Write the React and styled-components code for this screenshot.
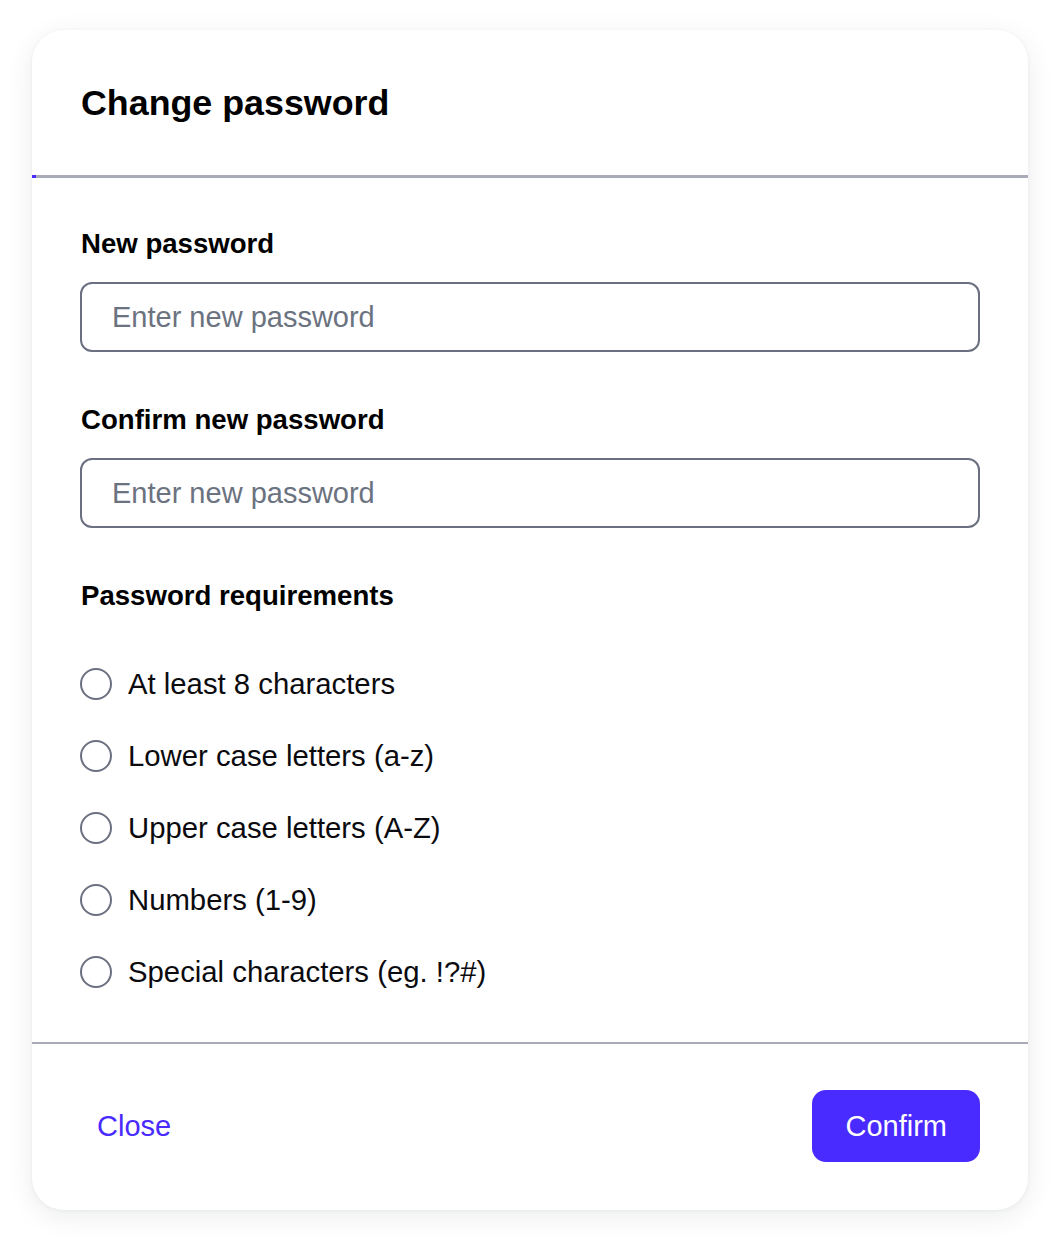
import React, { useState } from 'react'
import styled, { createGlobalStyle } from 'styled-components'

const GlobalStyle = createGlobalStyle`
  * { box-sizing: border-box; }
  html, body {
    margin: 0;
    padding: 0;
    background: #ffffff;
    font-family: "Liberation Sans", Arial, sans-serif;
    color: #0b0b0f;
  }
`

const Page = styled.div`
  padding: 30px 32px 34px 32px;
`

const Card = styled.div`
  width: 996px;
  background: #ffffff;
  border-radius: 32px;
  overflow: hidden;
  box-shadow: 0 6px 28px rgba(17, 24, 39, 0.08), 0 1px 4px rgba(17, 24, 39, 0.05);
`

const Header = styled.div`
  height: 145px;
  display: flex;
  align-items: center;
  padding: 3px 49px 0;
`

const Title = styled.h1`
  margin: 0;
  font-size: 35.8px;
  line-height: 1.15;
  font-weight: 700;
  color: #000000;
`

const Track = styled.div`
  display: flex;
  height: ${({ size }) => size}px;
  background: #a9abb9;
`

const Fill = styled.div`
  background: #4a2bff;
`

const Body = styled.div`
  display: flex;
  flex-direction: column;
  gap: 51px;
  padding: 49px 48px 50px 49px;
`

const Field = styled.div`
  display: flex;
  flex-direction: column;
  gap: 21px;
`

const Label = styled.label`
  font-size: 27.6px;
  line-height: 34px;
  font-weight: 700;
  color: #000000;
`

const Input = styled.input`
  width: 900px;
  margin-left: -1px;
  height: 70px;
  border: 2px solid #6b7080;
  border-radius: 12px;
  padding: 0 30px;
  font-family: inherit;
  font-size: 29px;
  color: #111111;
  outline: none;
  background: #ffffff;

  &::placeholder {
    color: #6b7280;
  }
`

const List = styled.ul`
  list-style: none;
  margin: 0;
  padding: 0;
  display: flex;
  flex-direction: column;
  gap: 32px;
`

const Rule = styled.li`
  display: flex;
  align-items: center;
  height: 40px;
  gap: 16px;
  margin-left: -1px;
  font-size: 29.3px;
  color: ${({ met }) => (met ? '#16a34a' : '#0b0b0f')};
`

const Circle = styled.span`
  width: 32px;
  height: 32px;
  border-radius: 50%;
  border: 2.5px solid ${({ met }) => (met ? '#16a34a' : '#6b7080')};
  flex-shrink: 0;
`

const Footer = styled.div`
  display: flex;
  align-items: center;
  justify-content: space-between;
  padding: 46px 48px 48px 49px;
`

const TextButton = styled.button`
  height: 72px;
  padding: 0 16px;
  border: none;
  background: transparent;
  font-family: inherit;
  font-size: 29px;
  color: #4a2bff;
  cursor: pointer;
`

const PrimaryButton = styled.button`
  height: 72px;
  padding: 0 33px;
  border: none;
  border-radius: 14px;
  background: #4a2bff;
  color: #ffffff;
  font-family: inherit;
  font-size: 29px;
  cursor: pointer;
`

const rules = [
  { label: 'At least 8 characters', test: (v) => v.length >= 8 },
  { label: 'Lower case letters (a-z)', test: (v) => /[a-z]/.test(v) },
  { label: 'Upper case letters (A-Z)', test: (v) => /[A-Z]/.test(v) },
  { label: 'Numbers (1-9)', test: (v) => /[0-9]/.test(v) },
  { label: 'Special characters (eg. !?#)', test: (v) => /[^A-Za-z0-9]/.test(v) },
]

const App = () => {
  const [password, setPassword] = useState('')
  const [confirm, setConfirm] = useState('')

  return (
    <React.Fragment>
      <GlobalStyle />
      <Page>
        <Card>
          <Header>
            <Title>Change password</Title>
          </Header>
          <Track size={3}>
            <Fill style={{ width: 4 }} />
          </Track>
          <Body>
            <Field>
              <Label htmlFor="new-password">New password</Label>
              <Input
                id="new-password"
                type="password"
                placeholder="Enter new password"
                value={password}
                onChange={(e) => setPassword(e.target.value)}
              />
            </Field>
            <Field>
              <Label htmlFor="confirm-password">Confirm new password</Label>
              <Input
                id="confirm-password"
                type="password"
                placeholder="Enter new password"
                value={confirm}
                onChange={(e) => setConfirm(e.target.value)}
              />
            </Field>
            <Label as="div">Password requirements</Label>
            <List>
              {rules.map((rule) => {
                const met = rule.test(password)
                return (
                  <Rule key={rule.label} met={met}>
                    <Circle met={met} />
                    {rule.label}
                  </Rule>
                )
              })}
            </List>
          </Body>
          <Track size={2} />
          <Footer>
            <TextButton>Close</TextButton>
            <PrimaryButton>Confirm</PrimaryButton>
          </Footer>
        </Card>
      </Page>
    </React.Fragment>
  )
}

export default App
